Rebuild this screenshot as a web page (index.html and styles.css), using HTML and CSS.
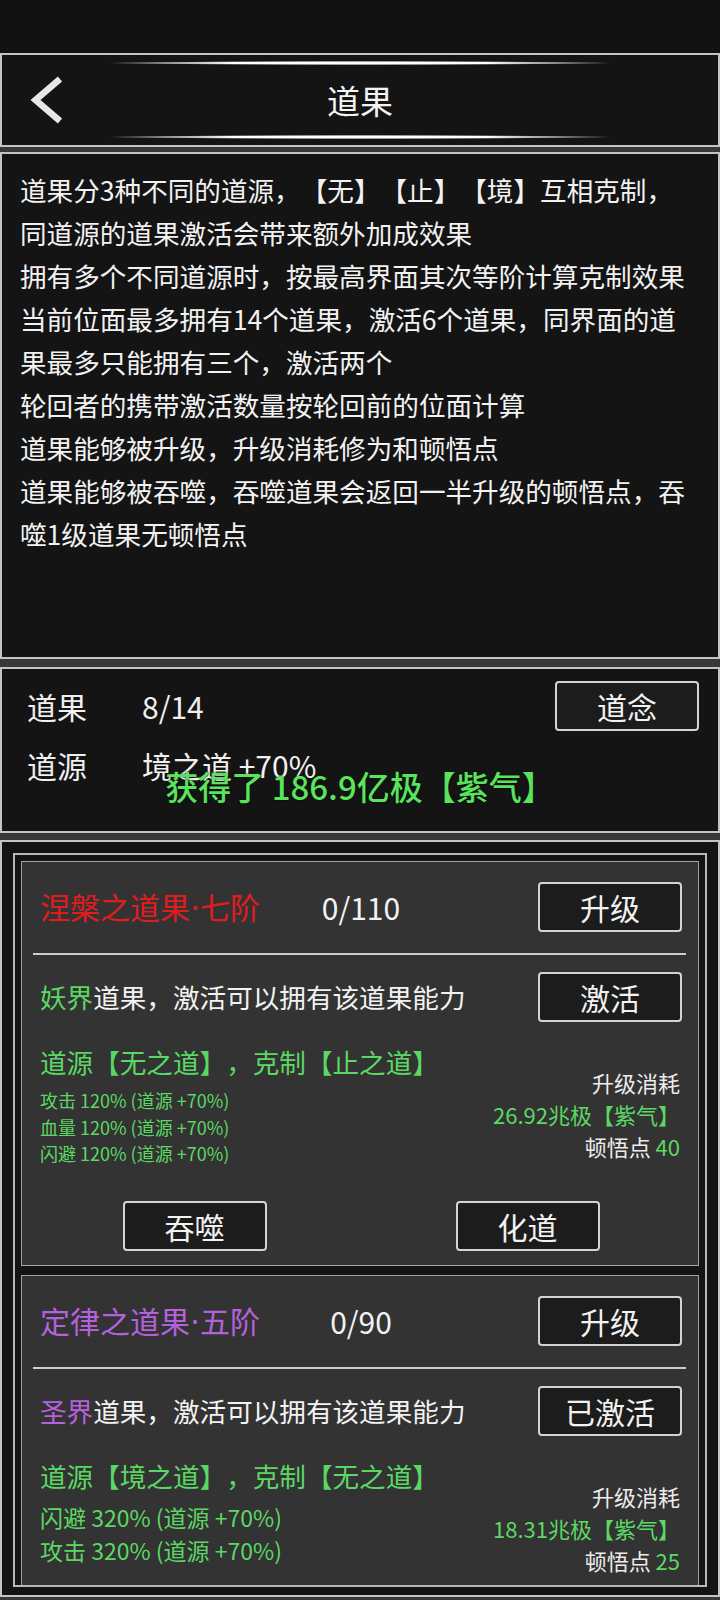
FILE: index.html
```html
<!DOCTYPE html>
<html lang="zh-CN">
<head>
<meta charset="utf-8">
<title>道果</title>
<link rel="stylesheet" href="styles.css">
</head>
<body>
<div class="screen">
  <div class="statusbar"></div>

  <header class="panel header">
    <div class="glow"></div>
    <div class="header-row">
      <div class="back">
        <svg width="44" height="60" viewBox="0 0 44 60" aria-hidden="true">
          <path d="M36 9 L11.5 30 L36 51" fill="none" stroke="#e8e8e8" stroke-width="6.5" stroke-linejoin="miter" stroke-linecap="butt"/>
        </svg>
      </div>
      <h1 class="title">道果</h1>
      <div></div>
    </div>
    <div class="glow glow-bottom"></div>
  </header>

  <section class="panel desc">
    <p>道果分3种不同的道源，【无】【止】【境】互相克制，同道源的道果激活会带来额外加成效果</p>
    <p>拥有多个不同道源时，按最高界面其次等阶计算克制效果</p>
    <p>当前位面最多拥有14个道果，激活6个道果，同界面的道果最多只能拥有三个，激活两个</p>
    <p>轮回者的携带激活数量按轮回前的位面计算</p>
    <p>道果能够被升级，升级消耗修为和顿悟点</p>
    <p>道果能够被吞噬，吞噬道果会返回一半升级的顿悟点，吞噬1级道果无顿悟点</p>
  </section>

  <section class="panel summary">
    <div class="sum-row">
      <span class="sum-label">道果</span>
      <span class="sum-value">8/14</span>
      <button class="btn">道念</button>
    </div>
    <div class="sum-row sum-row-2">
      <span class="sum-label">道源</span>
      <span class="sum-value">境之道 +70%</span>
    </div>
    <div class="toast">获得了 186.9亿极【紫气】</div>
  </section>

  <section class="panel list">
    <div class="viewport">
      <article class="card">
        <div class="card-head">
          <span class="card-title red">涅槃之道果<span class="dot">·</span>七阶</span>
          <span class="card-count">0/110</span>
          <button class="btn head-btn">升级</button>
        </div>
        <div class="divider"></div>
        <div class="card-act">
          <span class="act-text"><span class="green">妖界</span>道果，激活可以拥有该道果能力</span>
          <button class="btn">激活</button>
        </div>
        <div class="card-body">
          <div class="body-left">
            <div class="source">道源【无之道】，克制【止之道】</div>
            <div class="stats stats-sm">
              <div>攻击 120% (道源 +70%)</div>
              <div>血量 120% (道源 +70%)</div>
              <div>闪避 120% (道源 +70%)</div>
            </div>
          </div>
          <div class="body-right">
            <div>升级消耗</div>
            <div class="green">26.92兆极【紫气】</div>
            <div>顿悟点 <span class="green">40</span></div>
          </div>
        </div>
        <div class="card-actions">
          <button class="btn">吞噬</button>
          <button class="btn">化道</button>
        </div>
      </article>

      <article class="card card-clipped">
        <div class="card-head">
          <span class="card-title purple">定律之道果<span class="dot">·</span>五阶</span>
          <span class="card-count">0/90</span>
          <button class="btn head-btn">升级</button>
        </div>
        <div class="divider"></div>
        <div class="card-act">
          <span class="act-text"><span class="purple">圣界</span>道果，激活可以拥有该道果能力</span>
          <button class="btn">已激活</button>
        </div>
        <div class="card-body">
          <div class="body-left">
            <div class="source">道源【境之道】，克制【无之道】</div>
            <div class="stats stats-lg">
              <div>闪避 320% (道源 +70%)</div>
              <div>攻击 320% (道源 +70%)</div>
            </div>
          </div>
          <div class="body-right">
            <div>升级消耗</div>
            <div class="green">18.31兆极【紫气】</div>
            <div>顿悟点 <span class="green">25</span></div>
          </div>
        </div>
      </article>
    </div>
  </section>
</div>
</body>
</html>
```

FILE: styles.css
```css
* {
  box-sizing: border-box;
}

html,
body {
  margin: 0;
  padding: 0;
}

body {
  background: #1c1c1c;
  font-family: "Noto Sans CJK SC", "Noto Sans", sans-serif;
  color: #f0f0f0;
  text-spacing-trim: space-all;
}

.screen {
  width: 720px;
  height: 1600px;
  background: #383838;
  overflow: hidden;
}

.statusbar {
  height: 53px;
  background: #121212;
}

.panel {
  border: 2px solid #c4c4c4;
  background: #141414;
}

/* header */
.header {
  height: 94px;
  display: flex;
  flex-direction: column;
}

.glow {
  height: 4px;
  margin: 6px 99px 0;
  background: radial-gradient(closest-side, #ffffff 55%, rgba(230, 230, 230, 0.55) 80%, rgba(200, 200, 200, 0));
}

.glow-bottom {
  margin: 0 99px 6px;
}

.header-row {
  flex: 1;
  display: grid;
  grid-template-columns: 1fr auto 1fr;
  align-items: center;
}

.back {
  display: flex;
  align-items: center;
  padding-left: 22px;
}

.title {
  margin: 0;
  font-size: 33px;
  font-weight: normal;
  line-height: 1;
  color: #f4f4f4;
}

/* description */
.desc {
  height: 507px;
  margin-top: 5px;
  padding: 14px 26px 0 18px;
  font-size: 26.6px;
  line-height: 43px;
  color: #f2f2f2;
}

.desc p {
  margin: 0;
}

/* summary */
.summary {
  position: relative;
  height: 166px;
  margin-top: 8px;
  padding: 12px 19px 0 25px;
  font-size: 30px;
}

.sum-row {
  display: grid;
  grid-template-columns: 115px 1fr auto;
  align-items: center;
  height: 50px;
  line-height: 1;
}

.sum-row-2 {
  margin-top: 14px;
  height: 40px;
}

.toast {
  position: absolute;
  left: 0;
  right: 0;
  top: 97px;
  text-align: center;
  font-size: 33px;
  font-weight: 500;
  line-height: 40px;
  color: #5ae35c;
  text-shadow: 0 0 2px rgba(0, 0, 0, 0.8);
}

/* buttons */
.btn {
  width: 144px;
  height: 50px;
  padding: 0;
  border: 2px solid #d4d4d4;
  border-radius: 4px;
  background: #1c1c1c;
  color: #f2f2f2;
  font-family: inherit;
  font-size: 30px;
  line-height: 1;
}

/* list */
.list {
  height: 757px;
  margin-top: 7px;
  padding: 11px 11px 0;
}

.viewport {
  height: 734px;
  border: 2px solid #b8b8b8;
  background: #141414;
  padding: 6px 6px 0;
  overflow: hidden;
  display: flex;
  flex-direction: column;
  gap: 9px;
}

.card {
  flex: none;
  border: 1px solid #a4a4a4;
  background: #333333;
  padding: 20px 16px 14px 18px;
}

.card-clipped {
  height: 330px;
}

.card-head {
  display: grid;
  grid-template-columns: 1fr auto 1fr;
  align-items: center;
  height: 50px;
}

.card-title {
  font-size: 30px;
  line-height: 1;
  white-space: nowrap;
}

.dot {
  font-family: "Noto Sans", sans-serif;
  margin: 0 1px;
}

.card-count {
  font-size: 30px;
  line-height: 1;
  color: #f2f2f2;
}

.head-btn {
  justify-self: end;
}

.red {
  color: #e01c1e;
}

.purple {
  color: #b462dc;
}

.green {
  color: #5bd863;
}

.divider {
  height: 2px;
  margin: 21px -4px 0 -7px;
  background: #cdcdcd;
}

.card-act {
  display: flex;
  justify-content: space-between;
  align-items: center;
  height: 50px;
  margin-top: 17px;
}

.act-text {
  font-size: 26.6px;
  line-height: 1;
  color: #f2f2f2;
}

.card-body {
  display: flex;
  justify-content: space-between;
  align-items: flex-start;
  margin-top: 20px;
}

.source {
  font-size: 26.6px;
  line-height: 40px;
  color: #5bd863;
}

.stats {
  margin-top: 5px;
  color: #5bd863;
}

.stats-sm {
  font-size: 18px;
  line-height: 26.5px;
}

.stats-lg {
  font-size: 23px;
  line-height: 33px;
}

.body-right {
  padding-top: 24px;
  padding-right: 2px;
  text-align: right;
  font-size: 22px;
  line-height: 32px;
  color: #ececec;
}

.card-actions {
  display: flex;
  justify-content: center;
  gap: 189px;
  margin-top: 34.5px;
}
```
